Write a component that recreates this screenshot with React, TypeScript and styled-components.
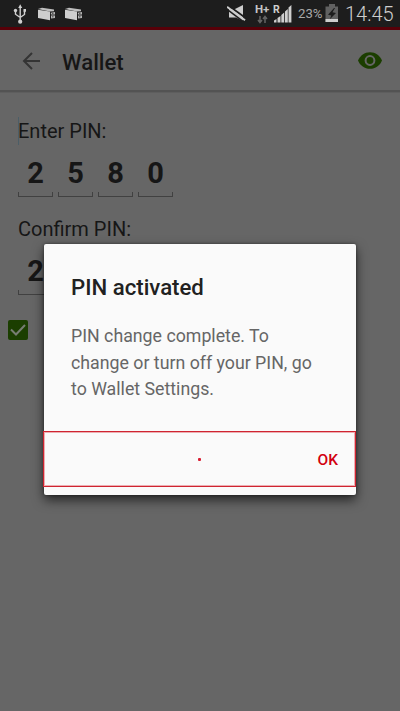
import React from "react";
import styled, { createGlobalStyle } from "styled-components";

const GlobalStyle = createGlobalStyle`
  * { box-sizing: border-box; }
  body { margin: 0; background: #666; font-family: Roboto, sans-serif; }
  p, h1, h2 { margin: 0; }
`;

const Screen = styled.main`
  position: relative;
  width: 400px;
  height: 711px;
  overflow: hidden;
  background: #666;
  color: #161616;
`;

const StatusBar = styled.div`
  display: flex;
  justify-content: space-between;
  height: 30px;
  background: #1d1d1d;
  border-bottom: 3px solid #570008;
`;

const StatusGroup = styled.div`
  display: flex;
  height: 27px;
`;

const StatusText = styled.span<{ $size: number; $width: number; $color: string }>`
  width: ${(p) => p.$width}px;
  font-size: ${(p) => p.$size}px;
  line-height: 28px;
  color: ${(p) => p.$color};
  font-weight: ${(p) => (p.$size > 16 ? 300 : 400)};
  white-space: nowrap;
`;

const Network = styled.div`
  width: 17px;
  padding-top: 3px;
  font-size: 11.5px;
  font-weight: 700;
  line-height: 12px;
  color: #c4c4c4;
  svg { display: block; margin: 0 0 0 2px; }
`;

const AppBar = styled.header`
  display: flex;
  align-items: center;
  height: 63px;
  padding: 0 17px 0 20px;
  border-bottom: 1px solid #5e5e5e;
  box-shadow: inset 0 -2px 0 #535353;
`;

const Title = styled.h1`
  flex: 1;
  margin-left: 20px;
  padding-top: 2px;
  font-size: 22.2px;
  line-height: 28px;
  font-weight: 500;
`;

const Form = styled.div`
  padding: 24px 18px 0;
`;

const Field = styled.section`
  height: 98px;
`;

const Label = styled.label<{ $focused?: boolean }>`
  display: block;
  height: 28px;
  font-size: 20px;
  line-height: 28px;
  box-shadow: ${(p) => (p.$focused ? "inset 1px 0 0 #4c5e67" : "none")};
`;

const Digits = styled.div`
  display: flex;
  gap: 5px;
  padding-top: 10px;
`;

const Digit = styled.div`
  width: 35px;
  height: 42px;
  display: flex;
  flex-direction: column;
  justify-content: space-between;
  text-align: center;
  font-size: 29px;
  line-height: 36px;
  font-weight: 700;
`;

const Underline = styled.i`
  height: 5px;
  margin-top: -4px;
  border: 1px solid #414141;
  border-top: 0;
`;

const Checkbox = styled.div`
  display: flex;
  width: 20px;
  height: 20px;
  margin: 7px 0 0 -10px;
  border-radius: 2px;
  background: #1b3e00;
`;

const Dialog = styled.div`
  position: absolute;
  left: 44px;
  top: 244px;
  width: 312px;
  height: 251px;
  border-radius: 2px;
  background: #fafafa;
  box-shadow: 0 5px 12px rgba(0, 0, 0, 0.65), 0 0 3px rgba(0, 0, 0, 0.45);
`;

const DialogBody = styled.div`
  height: 187px;
  padding: 28px 27px 0;
`;

const DialogTitle = styled.h2`
  font-size: 22.2px;
  line-height: 30px;
  font-weight: 500;
  color: #212121;
`;

const Message = styled.p`
  margin-top: 21px;
  font-size: 17.75px;
  line-height: 26.7px;
  color: #666;
  white-space: nowrap;
`;

const Actions = styled.div`
  display: grid;
  grid-template-columns: 1fr auto 1fr;
  align-items: center;
  height: 56px;
  margin: 0 0 0 -1px;
  padding: 0 17px;
  border: 1px solid #cf2430;
  box-shadow: inset 0 0 0 1px rgba(212, 32, 44, 0.35);
`;

const Dot = styled.i`
  grid-column: 2;
  width: 3px;
  height: 3px;
  border-radius: 1px;
  background: #d91d32;
`;

const OkButton = styled.button`
  justify-self: end;
  padding: 1px 0 0;
  border: 0;
  background: none;
  font: 500 15.5px/20px Roboto, sans-serif;
  color: #d2000e;
`;

const UsbIcon = () => (
  <svg width="16" height="27" viewBox="0 0 16 27" fill="none" stroke="#cfcfcf" strokeWidth="1.4">
    <path d="M8.2 7v14M3.5 11v3.2l4.7 3.3 4.3-3v-4" />
    <path d="M8.2 4.3L6.2 8h4zM11.5 9h2.5v2.8h-2.5z" fill="#cfcfcf" stroke="none" />
    <circle cx="3.5" cy="10.5" r="1.7" fill="#cfcfcf" stroke="none" />
    <circle cx="8.2" cy="21.7" r="2.1" fill="#cfcfcf" stroke="none" />
  </svg>
);

const DeviceIcon = () => (
  <svg width="18" height="27" viewBox="0 0 18 27">
    <path d="M0 9.7L12 11.5v8.8L0 18z" fill="#cecece" />
    <path d="M0 9l4-1.3 12 1.7v1.8l-4.200.3z" fill="#bebebe" />
    <path d="M12.800 12.700l4.200-.8v2.600h-4zM13 15.500h4v2.400l-4 .6z" fill="#b5b5b5" />
    <path d="M14 13.300h1.500M14 16.800h1.500" stroke="#242424" strokeWidth=".8" />
  </svg>
);

const MuteIcon = () => (
  <svg width="20" height="27" viewBox="0 0 20 27">
    <path d="M2 9h6l8-4v16l-7-3.500H2z" fill="#cdcdcd" />
    <path d="M1 5.300l18 13" stroke="#1d1d1d" strokeWidth="1.800" />
    <path d="M0 6.800l18 13.500" stroke="#cdcdcd" strokeWidth="2" />
    <path d="M0 9.300l16 12" stroke="#1d1d1d" strokeWidth="1.600" />
  </svg>
);

const SignalIcon = () => (
  <svg width="19" height="27" viewBox="0 0 19 27" fill="#cfcfcf">
    <path d="M1 20.500l2.500-1.500v3.500H1zM4.500 18l3-2v6.500h-3zM8.300 15l2.900-2.500v10H8.300zM12 11.500L14.800 9v13.500H12zM15.500 7.500L18.400 5v17.500h-2.900z" />
    <text x="0" y="12.700" fontFamily="Roboto" fontSize="10.500" fontWeight="700">R</text>
  </svg>
);

const BatteryIcon = () => (
  <svg width="14" height="27" viewBox="0 0 14 27">
    <path d="M4 4h6v2.500h3V22H.5V6.500H4z" fill="#616161" />
    <path d="M.5 19H13v3H.5z" fill="#cecece" />
    <path d="M9 8l-6 6.700 3.200.8L5 19l6-6-3.500-.8L10 8z" fill="#1d1d1d" />
  </svg>
);

const BackIcon = () => (
  <svg width="22" height="20" viewBox="0 0 22 20" fill="none" stroke="#343434" strokeWidth="2">
    <path d="M20 10H4M12 2l-8 8 8 8" />
  </svg>
);

const EyeIcon = () => (
  <svg width="26" height="18" viewBox="0 0 26 18">
    <path d="M1 8.500C3 3.500 7.600.200 13 .200s10 3.300 12 8.300c-2 5-6.600 8.300-12 8.300S3 13.500 1 8.500z" fill="#1b3e00" />
    <circle cx="13" cy="8.500" r="4.400" fill="none" stroke="#666" strokeWidth="2" />
  </svg>
);

const CheckIcon = () => (
  <svg width="20" height="20" viewBox="0 0 20 20" fill="none" stroke="#777d72" strokeWidth="2">
    <path d="M3 9.500l5 5L17 5" />
  </svg>
);

const StatusLeft = styled(StatusGroup)`
  padding-left: 12px;
  gap: 9px;
  svg:first-child { margin-right: 1px; }
`;

const StatusRight = styled(StatusGroup)`
  svg { flex: none; }
`;

const Gap = styled.span<{ $w: number }>`
  flex: none;
  width: ${(p) => p.$w}px;
`;

const PinField = ({ label, digits, focused }: { label: string; digits: string[]; focused?: boolean }) => (
  <Field>
    <Label $focused={focused}>{label}</Label>
    <Digits>
      {digits.map((d) => (
        <Digit key={d}>
          {d}
          <Underline />
        </Digit>
      ))}
    </Digits>
  </Field>
);

export default function App() {
  return (
    <Screen>
      <GlobalStyle />
      <StatusBar>
        <StatusLeft>
          <UsbIcon />
          <DeviceIcon />
          <DeviceIcon />
        </StatusLeft>
        <StatusRight>
          <MuteIcon />
          <Gap $w={8} />
          <Network>
            H+
            <svg width="12" height="9" viewBox="0 0 12 9" stroke="#646464" strokeWidth="1.500" fill="none">
              <path d="M3 1v6M1 5l2 2.500L5 5M8 8V2M6 4l2-2.500L10 4" />
            </svg>
          </Network>
          <Gap $w={1} />
          <SignalIcon />
          <Gap $w={6} />
          <StatusText $size={13.2} $width={27} $color="#a8a8a8">23%</StatusText>
          <BatteryIcon />
          <Gap $w={6} />
          <StatusText $size={20} $width={55} $color="#cecece">14:45</StatusText>
        </StatusRight>
      </StatusBar>
      <AppBar>
        <BackIcon />
        <Title>Wallet</Title>
        <EyeIcon />
      </AppBar>
      <Form>
        <PinField label="Enter PIN:" digits={["2", "5", "8", "0"]} focused />
        <PinField label="Confirm PIN:" digits={["2"]} />
        <Checkbox>
          <CheckIcon />
        </Checkbox>
      </Form>
      <Dialog role="dialog">
        <DialogBody>
          <DialogTitle>PIN activated</DialogTitle>
          <Message>
            PIN change complete. To
            <br />
            change or turn off your PIN, go
            <br />
            to Wallet Settings.
          </Message>
        </DialogBody>
        <Actions>
          <Dot />
          <OkButton>OK</OkButton>
        </Actions>
      </Dialog>
    </Screen>
  );
}
